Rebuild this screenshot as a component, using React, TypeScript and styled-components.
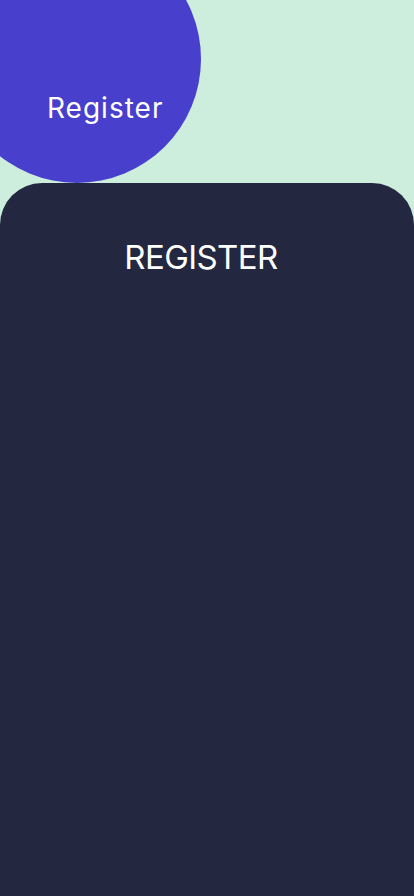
import React from "react";
import styled, { createGlobalStyle } from "styled-components";

const Global = createGlobalStyle`
  html, body { margin: 0; padding: 0; }
  body { background: #cdeedd; font-family: "Inter", "Noto Sans", sans-serif; }
  * { box-sizing: border-box; }
`;

const Page = styled.div`
  min-height: 896px;
  display: flex;
  flex-direction: column;
  background: #cdeedd;
  overflow: hidden;
`;

const Header = styled.header`
  height: 183px;
  display: flex;
  align-items: flex-start;
`;

const Blob = styled.div`
  width: 248px;
  height: 248px;
  flex: none;
  margin: -65px 0 0 -47px;
  border-radius: 50%;
  background: #4840cc;
  display: flex;
  flex-direction: column;
  padding: 159px 0 0 94px;
`;

const BlobLabel = styled.span`
  color: #ffffff;
  font-size: 28px;
  line-height: 1;
  font-weight: 400;
  letter-spacing: 1px;
`;

const Panel = styled.main`
  flex: 1;
  background: #23273f;
  border-radius: 42px 42px 0 0;
  display: flex;
  flex-direction: column;
  align-items: center;
  padding: 58px 12px 0 0;
`;

const Title = styled.h1`
  margin: 0;
  color: #ffffff;
  font-size: 33px;
  line-height: 1;
  font-weight: 400;
  letter-spacing: -0.6px;
`;

export default function App() {
  return (
    <>
      <Global />
      <Page>
        <Header>
          <Blob>
            <BlobLabel>Register</BlobLabel>
          </Blob>
        </Header>
        <Panel>
          <Title>REGISTER</Title>
        </Panel>
      </Page>
    </>
  );
}
